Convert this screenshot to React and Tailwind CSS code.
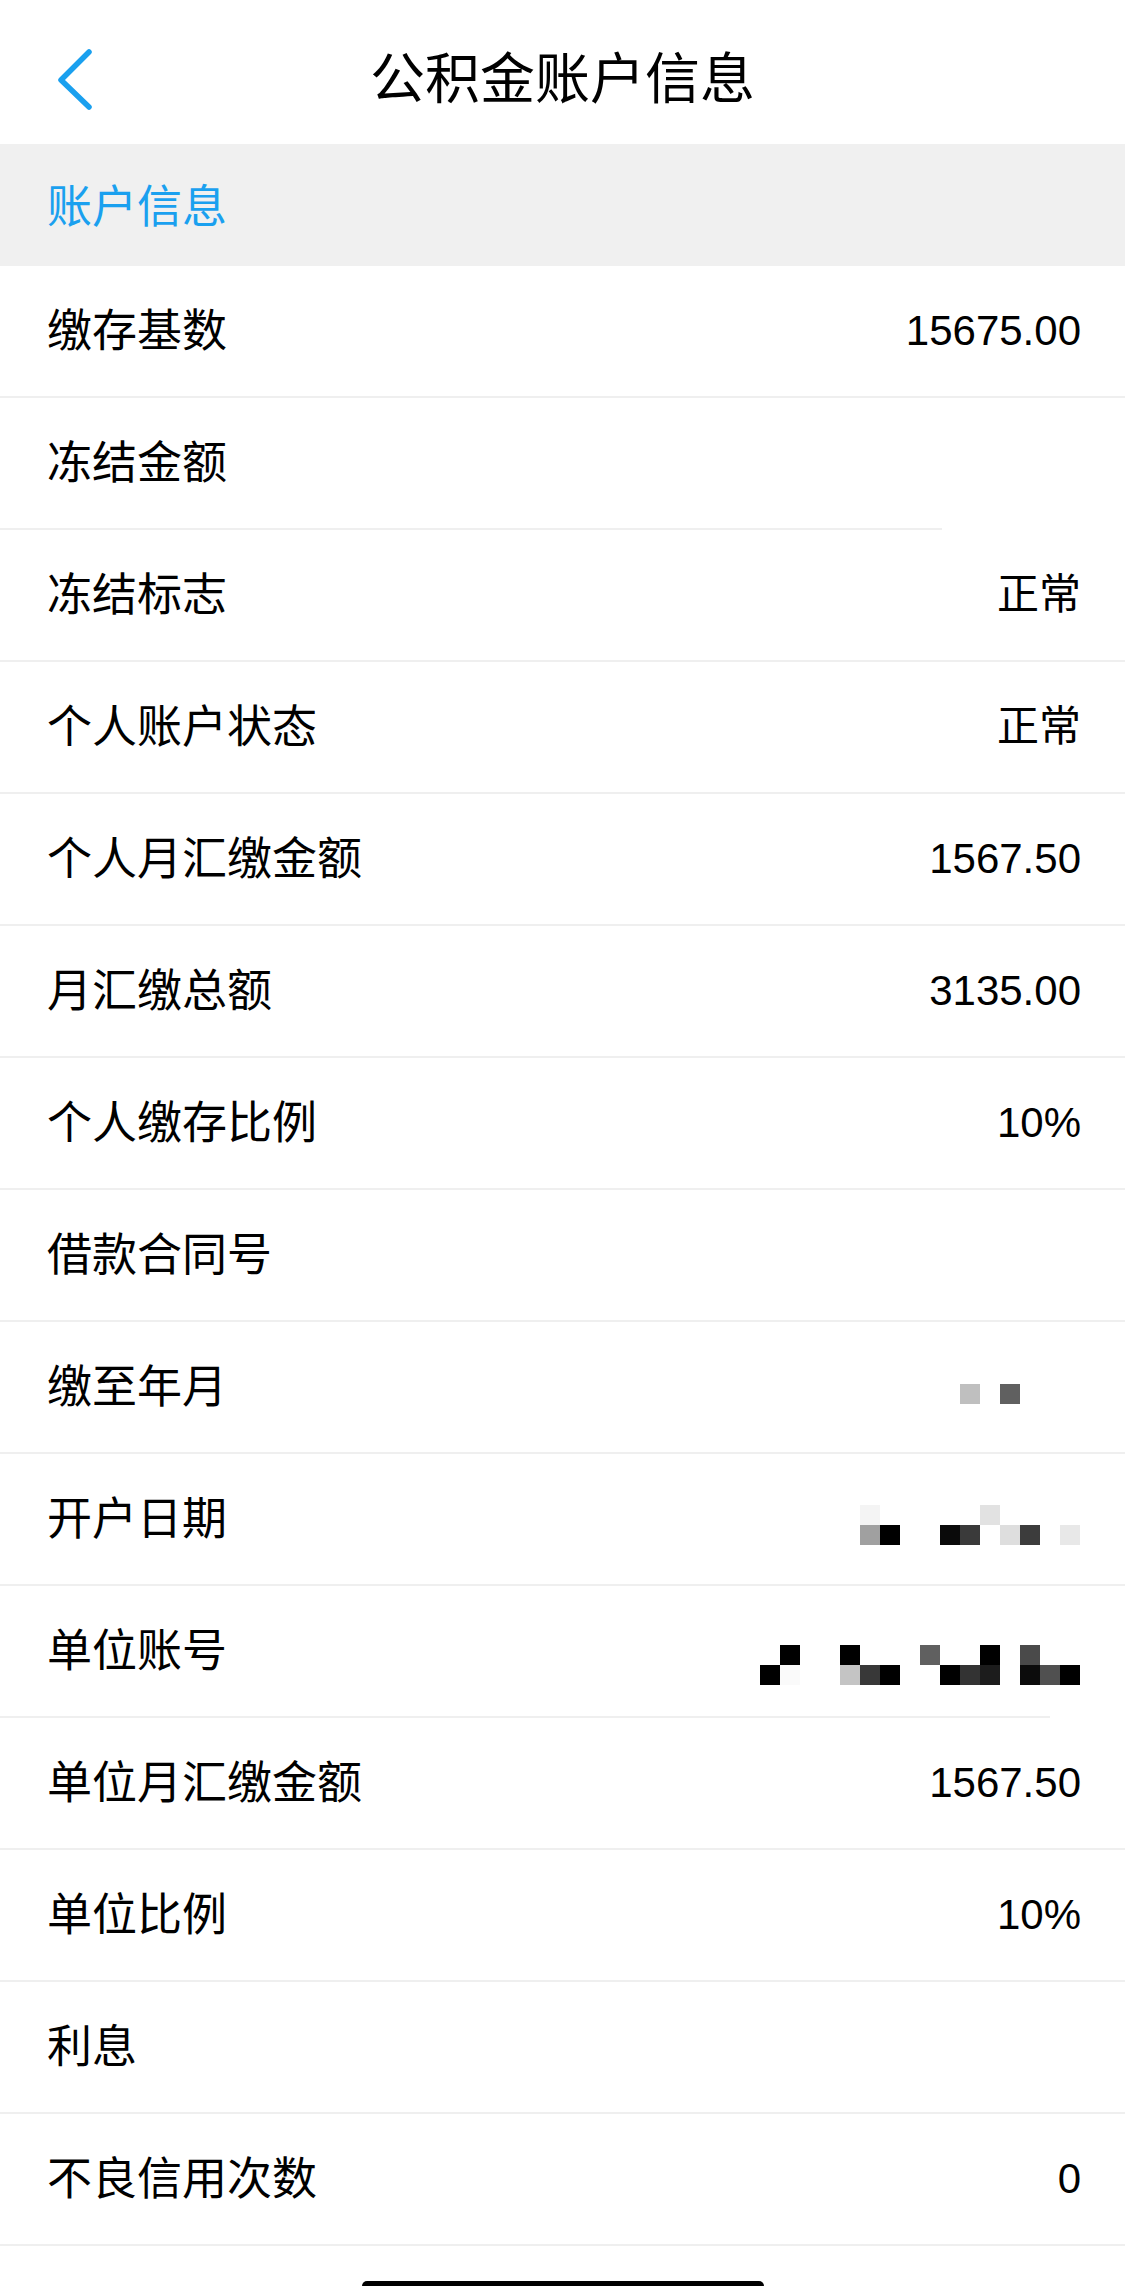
import React from 'react';

// 马赛克打码块（按 20px 一格）
const mosaics = {
  month: {
    w: 120,
    h: 20,
    cells: [
      [0, 0, '#bfbfbf'],
      [2, 0, '#606060'],
    ],
  },
  open: {
    w: 220,
    h: 40,
    cells: [
      [0, 0, '#f4f4f4'],
      [6, 0, '#e2e2e2'],
      [0, 1, '#a0a0a0'],
      [1, 1, '#000000'],
      [4, 1, '#0a0a0a'],
      [5, 1, '#3a3a3a'],
      [7, 1, '#dedede'],
      [8, 1, '#3c3c3c'],
      [10, 1, '#e8e8e8'],
    ],
  },
  unit: {
    w: 320,
    h: 40,
    cells: [
      [1, 0, '#000000'],
      [4, 0, '#000000'],
      [8, 0, '#606060'],
      [11, 0, '#000000'],
      [13, 0, '#4a4a4a'],
      [0, 1, '#000000'],
      [1, 1, '#fafafa'],
      [4, 1, '#c4c4c4'],
      [5, 1, '#383838'],
      [6, 1, '#000000'],
      [9, 1, '#000000'],
      [10, 1, '#333333'],
      [11, 1, '#1c1c1c'],
      [13, 1, '#0c0c0c'],
      [14, 1, '#505050'],
      [15, 1, '#000000'],
    ],
  },
};

function Mosaic({ type }) {
  const m = mosaics[type];
  return (
    <svg width={m.w} height={m.h} viewBox={`0 0 ${m.w} ${m.h}`} className="block">
      {m.cells.map(([c, r, fill], i) => (
        <rect key={i} x={c * 20} y={r * 20} width="20" height="20" fill={fill} />
      ))}
    </svg>
  );
}

const rows = [
  { label: '缴存基数', value: '15675.00' },
  { label: '冻结金额', value: '', line: 'w-[942px]' },
  { label: '冻结标志', value: '正常' },
  { label: '个人账户状态', value: '正常' },
  { label: '个人月汇缴金额', value: '1567.50' },
  { label: '月汇缴总额', value: '3135.00' },
  { label: '个人缴存比例', value: '10%' },
  { label: '借款合同号', value: '' },
  { label: '缴至年月', mosaic: 'month', mt: 'mt-[62px]' },
  { label: '开户日期', mosaic: 'open', mt: 'mt-[51px]' },
  { label: '单位账号', mosaic: 'unit', mt: 'mt-[59px]', line: 'w-[1050px]' },
  { label: '单位月汇缴金额', value: '1567.50' },
  { label: '单位比例', value: '10%' },
  { label: '利息', value: '' },
  { label: '不良信用次数', value: '0' },
];

export default function App() {
  return (
    <div
      className="min-h-screen bg-white text-black flex flex-col"
      style={{ fontFamily: '"Liberation Sans", "Noto Sans CJK SC", sans-serif' }}
    >
      {/* 顶部导航 */}
      <div className="h-[144px] pt-[14px] grid grid-cols-[1fr_auto_1fr] items-center">
        <div className="pl-[56px]">
          <svg width="40" height="62" viewBox="0 0 40 62" className="block">
            <polyline
              points="33,4 5,32 33,59"
              fill="none"
              stroke="#1aa0ef"
              strokeWidth="5.5"
              strokeLinecap="round"
              strokeLinejoin="round"
            />
          </svg>
        </div>
        <h1 className="text-[55px] leading-none font-normal">公积金账户信息</h1>
        <div />
      </div>

      {/* 分组标题 */}
      <div className="h-[122px] bg-[#f0f0f0] flex items-center px-[47px] pt-[4px]">
        <span className="text-[45px] leading-none text-[#1aa0ef]">账户信息</span>
      </div>

      {/* 列表 */}
      <div>
        {rows.map((row) => (
          <div key={row.label}>
            <div className="h-[130px] flex justify-between items-center pl-[47px] pr-[44px]">
              <span className="text-[45px] leading-none">{row.label}</span>
              {row.mosaic ? (
                <div className={`self-start ${row.mt} mr-[1px]`}>
                  <Mosaic type={row.mosaic} />
                </div>
              ) : (
                <span className="text-[42px] leading-none">{row.value}</span>
              )}
            </div>
            <div className={`h-[2px] bg-[#efefef] ${row.line || 'w-full'}`} />
          </div>
        ))}
      </div>

      {/* 底部 Home 指示条 */}
      <div className="flex-1 min-h-[40px] flex justify-center items-end">
        <div className="w-[402px] h-[5px] bg-black rounded-t-[6px]" />
      </div>
    </div>
  );
}
